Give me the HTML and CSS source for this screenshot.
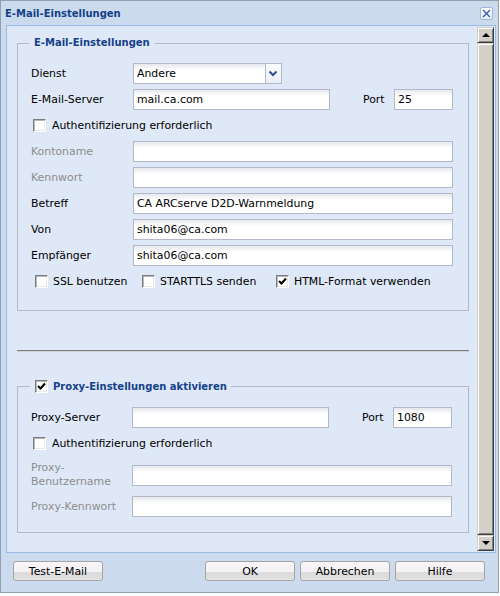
FILE: index.html
```html
<!DOCTYPE html>
<html lang="de">
<head>
    <meta charset="UTF-8">
    <meta name="viewport" content="width=device-width, initial-scale=1.0">
    <title>E-Mail-Einstellungen</title>
    <link rel="stylesheet" href="styles.css">
</head>
<body>

    <div class="window">
        <div class="window-header">
            <span class="window-title">E-Mail-Einstellungen</span>
            <span class="tool-close">
                <svg width="9" height="9" viewBox="0 0 9 9">
                    <path d="M1 1 L8 8 M8 1 L1 8" stroke="#2d5fa8" stroke-width="1.3" fill="none"/>
                </svg>
            </span>
        </div>

        <div class="window-body">
            <div class="panel">
                <div class="panel-scroll">

                    <fieldset class="group group-mail">
                        <legend>E-Mail-Einstellungen</legend>

                        <div class="row">
                            <label class="field-label">Dienst</label>
                            <div class="combo">
                                <input class="text combo-input" type="text" value="Andere">
                                <span class="combo-trigger">
                                    <svg width="15" height="19" viewBox="0 0 15 19">
                                        <polyline points="3.5,7.5 7,11 10.5,7.5" stroke="#2b4f8a" stroke-width="2" fill="none"/>
                                    </svg>
                                </span>
                            </div>
                        </div>

                        <div class="row">
                            <label class="field-label">E-Mail-Server</label>
                            <input class="text w-server" type="text" value="mail.ca.com">
                            <label class="port-label">Port</label>
                            <input class="text w-port" type="text" value="25">
                        </div>

                        <div class="row row-check">
                            <span class="check"></span>
                            <span>Authentifizierung erforderlich</span>
                        </div>

                        <div class="row">
                            <label class="field-label is-disabled">Kontoname</label>
                            <input class="text w-full" type="text" value="">
                        </div>

                        <div class="row">
                            <label class="field-label is-disabled">Kennwort</label>
                            <input class="text w-full" type="password" value="">
                        </div>

                        <div class="row">
                            <label class="field-label">Betreff</label>
                            <input class="text w-full" type="text" value="CA ARCserve D2D-Warnmeldung">
                        </div>

                        <div class="row">
                            <label class="field-label">Von</label>
                            <input class="text w-full" type="text" value="shita06@ca.com">
                        </div>

                        <div class="row">
                            <label class="field-label">Empfänger</label>
                            <input class="text w-full" type="text" value="shita06@ca.com">
                        </div>

                        <div class="row row-options">
                            <span class="option opt-ssl"><span class="check"></span>SSL benutzen</span>
                            <span class="option opt-tls"><span class="check"></span>STARTTLS senden</span>
                            <span class="option">
                                <span class="check">
                                    <svg width="9" height="9" viewBox="0 0 9 9">
                                        <polyline points="1,4 3.5,6.5 8,1.5" stroke="#000" stroke-width="2" fill="none"/>
                                    </svg>
                                </span>HTML-Format verwenden
                            </span>
                        </div>
                    </fieldset>

                    <div class="separator"></div>

                    <fieldset class="group group-proxy">
                        <legend>
                            <span class="legend-inner">
                                <span class="check">
                                    <svg width="9" height="9" viewBox="0 0 9 9">
                                        <polyline points="1,4 3.5,6.5 8,1.5" stroke="#000" stroke-width="2" fill="none"/>
                                    </svg>
                                </span>
                                Proxy-Einstellungen aktivieren
                            </span>
                        </legend>

                        <div class="row">
                            <label class="field-label">Proxy-Server</label>
                            <input class="text w-server" type="text" value="">
                            <label class="port-label">Port</label>
                            <input class="text w-port" type="text" value="1080">
                        </div>

                        <div class="row row-check">
                            <span class="check"></span>
                            <span>Authentifizierung erforderlich</span>
                        </div>

                        <div class="row row-tall">
                            <label class="field-label is-disabled">Proxy-<br>Benutzername</label>
                            <input class="text w-full" type="text" value="">
                        </div>

                        <div class="row">
                            <label class="field-label is-disabled">Proxy-Kennwort</label>
                            <input class="text w-full" type="password" value="">
                        </div>
                    </fieldset>

                </div>

                <div class="scrollbar">
                    <span class="sb-btn sb-up"></span>
                    <span class="sb-thumb"></span>
                    <span class="sb-btn sb-down"></span>
                </div>
            </div>

            <div class="toolbar">
                <button class="btn">Test-E-Mail</button>
                <span class="spacer"></span>
                <button class="btn">OK</button>
                <button class="btn">Abbrechen</button>
                <button class="btn">Hilfe</button>
            </div>
        </div>
    </div>

</body>
</html>
```

FILE: styles.css
```css
body {
    margin: 0;
    background-color: #fff;
    color: #000;
    font-family: "DejaVu Sans", Tahoma, sans-serif;
    font-size: 10.9px;
}

.window {
    width: 499px;
    height: 593px;
    box-sizing: border-box;
    border: 1px solid #8f9fb4;
    background-color: #cbdaec;
    display: flex;
    flex-direction: column;
}

.window-header {
    flex: none;
    height: 24px;
    padding: 1px 5px 0 4px;
    box-sizing: border-box;
    display: flex;
    align-items: center;
}

.window-title {
    flex: 1;
    font-weight: bold;
    font-size: 10px;
    color: #15428b;
}

.tool-close {
    width: 13px;
    height: 13px;
    box-sizing: border-box;
    border: 1px solid #9fb6da;
    border-radius: 2px;
    background: linear-gradient(#fff, #e4ecf7);
    display: flex;
    align-items: center;
    justify-content: center;
}

.window-body {
    flex: 1;
    display: flex;
    flex-direction: column;
    padding: 0 2px 0 5px;
}

.panel {
    flex: none;
    height: 528px;
    box-sizing: border-box;
    border: 1px solid #99bbe8;
    background-color: #dfe8f6;
    display: flex;
}

.panel-scroll {
    flex: 1;
    padding: 11px 8px 0 10px;
    overflow: hidden;
}

/* field groups */
.group {
    margin: 0;
    border: 1px solid #b5b8c8;
    min-width: 0;
}

.group legend {
    margin-left: -2px;
    padding: 0 5px;
    line-height: 12px;
    font-weight: bold;
    font-size: 10px;
    color: #15428b;
}

.group-mail {
    padding: 14px 14px 18px 13px;
}

.group-proxy {
    margin-top: 28px;
    padding: 14px 14px 15px 13px;
}

.group-proxy legend {
    margin-left: -1px;
    padding: 0 4px 0 5px;
    line-height: 13px;
}

.legend-inner {
    display: flex;
    align-items: center;
    gap: 5px;
}

.separator {
    margin-top: 39px;
    height: 0;
    border-top: 1px solid #7d7d7d;
    border-bottom: 1px solid #cfd3d8;
}

.row {
    display: flex;
    align-items: center;
    height: 21px;
    margin-bottom: 5px;
    line-height: 14px;
}

.row:last-child {
    margin-bottom: 0;
}

.row-tall {
    height: 32px;
}

.field-label {
    flex: none;
    width: 102px;
}

.group-proxy .field-label {
    width: 101px;
}

.field-label.is-disabled {
    color: #8d8d8d;
}

.port-label {
    flex: none;
    width: 31px;
    margin-left: 33px;
}

/* text fields */
.text {
    box-sizing: border-box;
    height: 21px;
    margin: 0;
    padding: 0 3px;
    border: 1px solid #b5b8c8;
    background: linear-gradient(#e6e8ec 0, #fff 6px);
    font: inherit;
    color: #000;
    outline: none;
}

.w-server {
    width: 197px;
}

.w-port {
    width: 59px;
}

.w-full {
    width: 320px;
}

.combo {
    display: flex;
    width: 149px;
    height: 21px;
}

.combo-input {
    width: 132px;
    border-right: none;
}

.combo-trigger {
    width: 17px;
    height: 21px;
    box-sizing: border-box;
    border: 1px solid #b5b8c8;
    background: linear-gradient(#fcfdfe, #e9eef5);
    display: flex;
    align-items: center;
    justify-content: center;
}

/* checkboxes */
.check {
    flex: none;
    width: 13px;
    height: 13px;
    box-sizing: border-box;
    border: 1px solid;
    border-color: #7b7b7b #fff #fff #7b7b7b;
    box-shadow: inset 1px 1px #b9b9b9, inset -1px -1px #ebe9e4;
    background-color: #fff;
    display: flex;
    align-items: center;
    justify-content: center;
}

.row-check {
    padding-left: 2px;
    gap: 6px;
}

.row-options {
    margin-top: 2px;
    padding-left: 4px;
}

.option {
    display: flex;
    align-items: center;
    gap: 5px;
}

.opt-ssl {
    width: 107px;
}

.opt-tls {
    width: 134px;
}

/* classic scrollbar */
.scrollbar {
    flex: none;
    width: 17px;
    margin: 1px 1px 1px 0;
    display: flex;
    flex-direction: column;
}

.sb-btn,
.sb-thumb {
    box-sizing: border-box;
    background-color: #d4d0c8;
    border: 1px solid;
    border-color: #d4d0c8 #404040 #404040 #d4d0c8;
    box-shadow: inset 1px 1px #fff, inset -1px -1px #808080;
}

.sb-btn {
    flex: none;
    height: 16px;
    display: flex;
    align-items: center;
    justify-content: center;
}

.sb-thumb {
    flex: 1;
}

.sb-up::before,
.sb-down::before {
    content: "";
    border-left: 4px solid transparent;
    border-right: 4px solid transparent;
}

.sb-up::before {
    border-bottom: 4px solid #000;
}

.sb-down::before {
    border-top: 4px solid #000;
}

/* dialog buttons */
.toolbar {
    display: flex;
    gap: 5px;
    margin-top: 8px;
    padding: 0 11px 0 7px;
}

.toolbar .spacer {
    flex: 1;
}

.btn {
    width: 90px;
    height: 20px;
    box-sizing: border-box;
    padding: 0;
    border: 1px solid #a4a4a4;
    border-radius: 3px;
    background: linear-gradient(#f8f6f8 0, #f3f1f3 55%, #dcdcdc 56%, #dedede 92%, #ececec 100%);
    font: inherit;
    font-weight: normal;
    color: #000;
}
```
